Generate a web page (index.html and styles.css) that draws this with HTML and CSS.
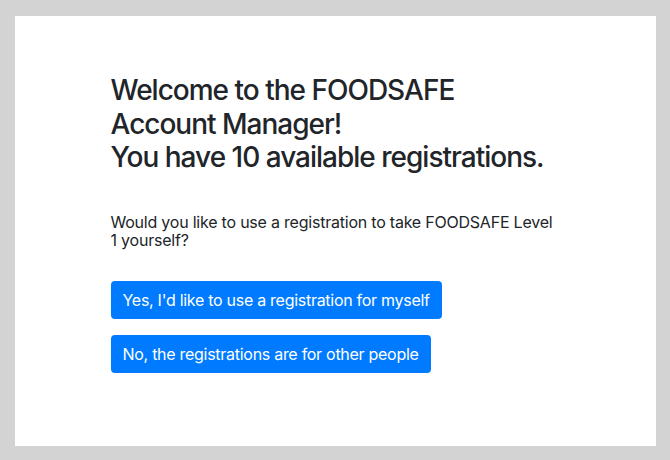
FILE: index.html
```html
<!DOCTYPE html>
<html lang="en">
<head>
  <meta charset="UTF-8">
  <title>FOODSAFE Account Manager</title>
  <link rel="stylesheet" href="styles.css">
</head>
<body>
  <div class="card">
    <div class="content">
      <h3>Welcome to the FOODSAFE Account Manager!<br>You have 10 available registrations.</h3>
      <p>Would you like to use a registration to take FOODSAFE Level 1 yourself?</p>
      <div class="actions">
        <button class="btn">Yes, I'd like to use a registration for myself</button>
        <button class="btn">No, the registrations are for other people</button>
      </div>
    </div>
  </div>
</body>
</html>
```

FILE: styles.css
```css
* {
  margin: 0;
  padding: 0;
  box-sizing: border-box;
  font-family: Inter, 'Liberation Sans', sans-serif;
}

body {
  background-color: #d3d3d3;
  color: #212529;
  padding: 16px 14px 14px 15px;
}

.card {
  background-color: #fff;
  width: 641px;
  height: 430px;
  padding-top: 58px;
}

.content {
  width: 450px;
  margin: 0 auto;
}

h3 {
  font-size: 28px;
  font-weight: 500;
  line-height: 1.2;
  letter-spacing: -1px;
  margin-bottom: 38px;
}

p {
  font-size: 16px;
  line-height: 18px;
  letter-spacing: -0.22px;
  margin-bottom: 32px;
}

.actions {
  display: flex;
  flex-direction: column;
  align-items: flex-start;
  gap: 16px;
}

.btn {
  background-color: #007bff;
  color: #fff;
  border: none;
  border-radius: 4px;
  padding: 7px 12px;
  font-size: 16px;
  line-height: 24px;
  letter-spacing: -0.28px;
  cursor: pointer;
}
```
